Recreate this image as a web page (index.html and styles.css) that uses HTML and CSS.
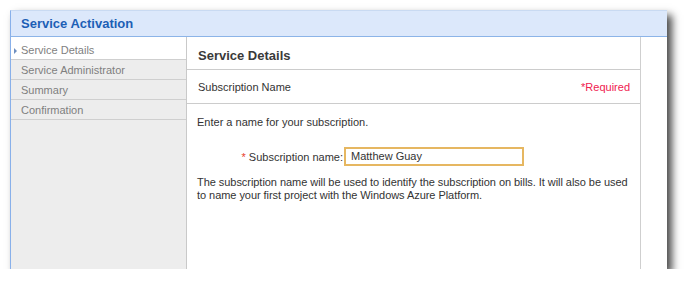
FILE: index.html
```html
<!DOCTYPE html>
<html>
<head>
<meta charset="utf-8">
<link rel="stylesheet" href="styles.css">
</head>
<body>
<div class="window">
  <div class="titlebar">Service Activation</div>
  <div class="body">
    <ul class="steps">
      <li class="step active"><span class="arrow"></span>Service Details</li>
      <li class="step">Service Administrator</li>
      <li class="step">Summary</li>
      <li class="step">Confirmation</li>
    </ul>
    <div class="main">
      <div class="main-head">Service Details</div>
      <div class="section-row">
        <span>Subscription Name</span>
        <span class="required">*Required</span>
      </div>
      <div class="content">
        <p class="intro">Enter a name for your subscription.</p>
        <div class="field">
          <label class="label"><span class="star">*</span> Subscription name:</label>
          <div class="input">Matthew Guay</div>
        </div>
        <p class="desc">The subscription name will be used to identify the subscription on bills. It will also be used to name your first project with the Windows Azure Platform.</p>
      </div>
    </div>
    <div class="gutter"></div>
  </div>
</div>
</body>
</html>
```

FILE: styles.css
```css
html, body {
  margin: 0;
  padding: 0;
  background: #ffffff;
}
body {
  padding: 10px 0 0 10px;
  font-family: "Liberation Sans", Arial, sans-serif;
  font-size: 11px;
  color: #333333;
}
.window {
  width: 657px;
  height: 259px;
  display: flex;
  flex-direction: column;
  background: #ffffff;
  box-shadow: 5px 5px 8px rgba(0, 0, 0, 0.72);
}
.titlebar {
  height: 25px;
  border-top: 1px solid #c9daf2;
  border-left: 1px solid #88b0ea;
  border-bottom: 1px solid #8cb4e8;
  background: #dce8fb;
  color: #1c5fb6;
  font-weight: bold;
  font-size: 13px;
  line-height: 25px;
  padding-left: 10px;
}
.body {
  flex: 1;
  display: flex;
  min-height: 0;
}
.steps {
  list-style: none;
  margin: 0;
  padding: 0;
  width: 175px;
  border-left: 1px solid #88b0ea;
  border-right: 1px solid #c9c9c9;
  background: #ededed;
}
.step {
  position: relative;
  height: 19px;
  line-height: 20px;
  border-bottom: 1px solid #cfcfcf;
  padding-left: 10px;
  color: #7f7f7f;
}
.step.active {
  background: #ffffff;
  height: 22px;
  line-height: 27px;
}
.arrow {
  position: absolute;
  left: 3px;
  top: 11px;
  width: 0;
  height: 0;
  border-top: 3px solid transparent;
  border-bottom: 3px solid transparent;
  border-left: 3px solid #6f8fc0;
}
.main {
  width: 453px;
  border-right: 1px solid #cfcfcf;
  display: flex;
  flex-direction: column;
}
.main-head {
  height: 32px;
  line-height: 38px;
  padding-left: 11px;
  font-size: 13px;
  font-weight: bold;
  color: #3a3a3a;
  border-bottom: 1px solid #cccccc;
}
.section-row {
  height: 33px;
  line-height: 34px;
  padding: 0 10px 0 11px;
  display: flex;
  justify-content: space-between;
  border-bottom: 1px solid #cccccc;
}
.required {
  color: #f0204f;
}
.content {
  padding: 11px 0 0 10px;
}
.intro {
  margin: 0;
  line-height: 14px;
}
.field {
  display: flex;
  align-items: center;
  margin-top: 18px;
}
.label {
  width: 146px;
  text-align: right;
  padding-right: 1px;
}
.star {
  color: #e8402f;
}
.input {
  width: 171px;
  height: 15px;
  line-height: 15px;
  border: 2px solid #e6b761;
  padding-left: 5px;
  color: #333333;
}
.desc {
  margin: 10px 0 0 0;
  padding-right: 2px;
  line-height: 13px;
  letter-spacing: -0.05px;
}
.gutter {
  flex: 1;
}
```
